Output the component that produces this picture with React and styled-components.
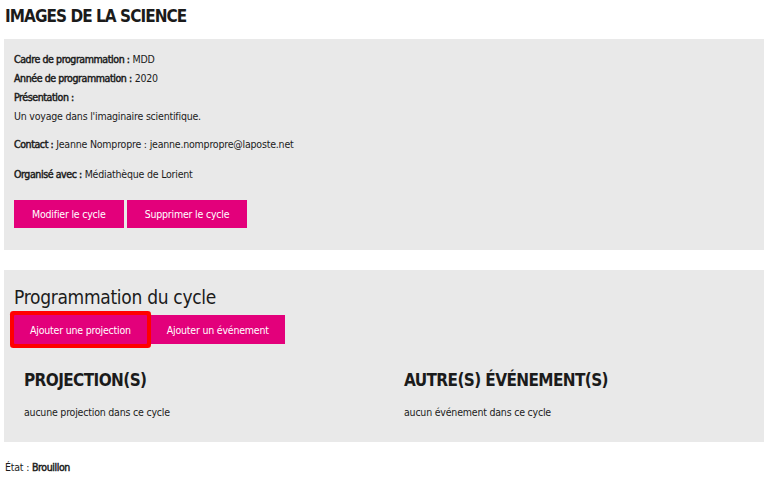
import React from "react";
import styled, { createGlobalStyle } from "styled-components";

const FONT = '"DejaVu Sans Condensed", "Liberation Sans", sans-serif';
const PINK = "#e3007b";
const GREY = "#e9e9e9";

const Global = createGlobalStyle`
  html, body { margin: 0; padding: 0; background: #fff; }
  body { font-family: ${FONT}; color: #1b1b1b; }
`;

const Page = styled.div`
  padding: 0 5px 0 4px;
  display: flex;
  flex-direction: column;
`;

const Title = styled.h1`
  margin: 0;
  padding: 5px 1px 0;
  height: 39px;
  box-sizing: border-box;
  font-size: 17px;
  letter-spacing: -0.95px;
  font-weight: 700;
  line-height: 22px;
`;

const Panel = styled.section`
  background: ${GREY};
  padding: ${(p) => p.$pad};
  display: flex;
  flex-direction: column;
  margin-bottom: ${(p) => p.$mb || 0};
`;

const Line = styled.p`
  margin: ${(p) => p.$mt || 0} 0 0;
  font-size: 10.5px;
  letter-spacing: -0.2px;
  line-height: 19px;
`;

const Label = styled.span`
  -webkit-text-stroke: 0.45px currentColor;
  letter-spacing: -0.4px;
`;

const ButtonRow = styled.div`
  display: flex;
  gap: ${(p) => p.$gap || "3px"};
  margin-top: ${(p) => p.$mt || 0};
`;

const Button = styled.button`
  background: ${PINK};
  color: #fff;
  border: 0;
  border-radius: ${(p) => (p.$focused ? "1px" : "0")};
  font-family: ${FONT};
  font-size: 10.5px;
  letter-spacing: -0.2px;
  height: ${(p) => p.$h || "28px"};
  padding: 0 ${(p) => p.$px || "18px"};
  cursor: pointer;
  box-shadow: ${(p) => (p.$focused ? "0 0 0 4px #ff0000" : "none")};
`;

const SubTitle = styled.h2`
  margin: 0;
  font-size: 19px;
  letter-spacing: -0.3px;
  font-weight: 400;
  line-height: 24px;
`;

const Columns = styled.div`
  display: grid;
  grid-template-columns: 1fr 1fr;
  column-gap: 20px;
  margin-top: 24px;
`;

const Column = styled.div`
  padding: 0 10px;
`;

const ColTitle = styled.h3`
  margin: 0;
  font-size: 17px;
  letter-spacing: -0.6px;
  font-weight: 700;
  line-height: 24px;
`;

const Empty = styled.p`
  margin: 12px 0 0;
  font-size: 10.5px;
  letter-spacing: -0.2px;
  line-height: 16px;
`;

const Status = styled.p`
  margin: 17px 0 0 1px;
  font-size: 10.5px;
  letter-spacing: -0.2px;
  line-height: 16px;
`;

export default function App() {
  return (
    <>
      <Global />
      <Page>
        <Title>IMAGES DE LA SCIENCE</Title>
        <Panel $pad="11px 10px 22px" $mb="20px">
          <Line><Label>Cadre de programmation :</Label> MDD</Line>
          <Line><Label>Année de programmation :</Label> 2020</Line>
          <Line><Label>Présentation :</Label></Line>
          <Line>Un voyage dans l'imaginaire scientifique.</Line>
          <Line $mt="9px"><Label>Contact :</Label> Jeanne Nompropre : jeanne.nompropre@laposte.net</Line>
          <Line $mt="11px"><Label>Organisé avec :</Label> Médiathèque de Lorient</Line>
          <ButtonRow $mt="16px">
            <Button>Modifier le cycle</Button>
            <Button>Supprimer le cycle</Button>
          </ButtonRow>
        </Panel>
        <Panel $pad="15px 10px 22px">
          <SubTitle>Programmation du cycle</SubTitle>
          <ButtonRow $mt="6px" $gap="4px">
            <Button $h="29px" $px="16px" $focused>Ajouter une projection</Button>
            <Button $h="29px" $px="16px">Ajouter un événement</Button>
          </ButtonRow>
          <Columns>
            <Column>
              <ColTitle>PROJECTION(S)</ColTitle>
              <Empty>aucune projection dans ce cycle</Empty>
            </Column>
            <Column>
              <ColTitle>AUTRE(S) ÉVÉNEMENT(S)</ColTitle>
              <Empty>aucun événement dans ce cycle</Empty>
            </Column>
          </Columns>
        </Panel>
        <Status>État : <Label>Brouillon</Label></Status>
      </Page>
    </>
  );
}
